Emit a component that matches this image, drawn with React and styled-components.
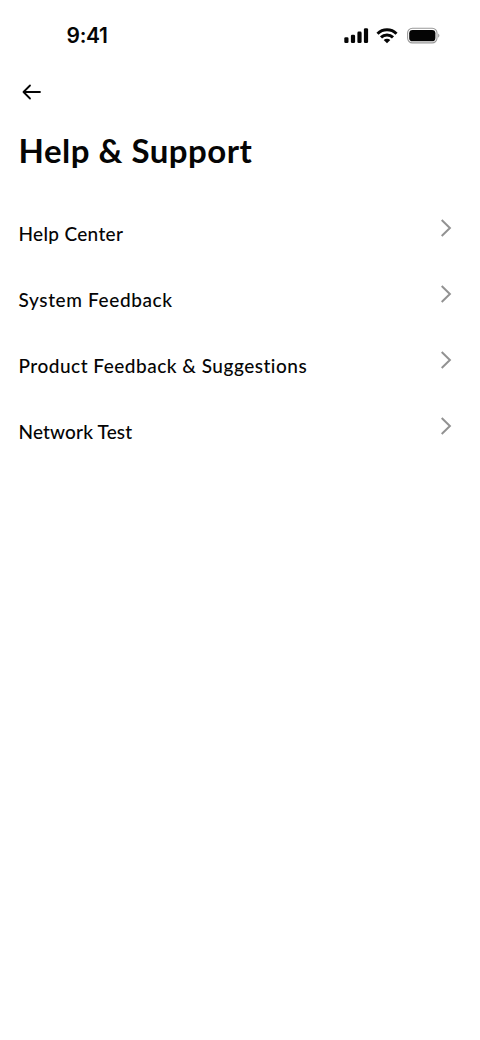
import React from 'react';
import styled, { createGlobalStyle } from 'styled-components';

const GlobalStyle = createGlobalStyle`
  * { box-sizing: border-box; }
  body { margin: 0; background: #fff; }
  svg { display: block; }
`;

const Screen = styled.div`
  width: 480px;
  height: 1040px;
  background: #fff;
  color: #050505;
  font-family: Lato, sans-serif;
  display: flex;
  flex-direction: column;
`;

const StatusBar = styled.div`
  height: 72px;
  padding: 0 40px 0 66.5px;
  display: flex;
  align-items: center;
  justify-content: space-between;
`;

const Clock = styled.span`
  font: 600 21px/30px Inter, sans-serif;
  letter-spacing: -0.3px;
`;

const StatusIcons = styled.div`
  display: flex;
  align-items: center;
`;

const IconSlot = styled.span`
  margin-right: ${(p) => p.$gap}px;
`;

const NavBar = styled.div`
  height: 40px;
  padding: 0 22px;
  display: flex;
  align-items: center;
`;

const BackButton = styled.button`
  border: 0;
  padding: 0;
  background: none;
  color: inherit;
`;

const Title = styled.h1`
  margin: 18px 0 0;
  padding-left: 18.5px;
  font-size: 33px;
  line-height: 40px;
  font-weight: 700;
  letter-spacing: 0.5px;
`;

const Menu = styled.ul`
  margin: 30px 0 0;
  padding: 0 28.5px 0 18.5px;
  list-style: none;
`;

const Row = styled.li`
  height: 66px;
  display: flex;
  align-items: flex-start;
  justify-content: space-between;
`;

const Label = styled.span`
  padding-top: 22px;
  font-size: 19px;
  line-height: 24px;
  font-weight: 500;
  letter-spacing: ${(p) => p.$tracking}px;
`;

const ChevronBox = styled.span`
  padding-top: 18px;
`;

const items = [
  { label: 'Help Center', tracking: 0.32 },
  { label: 'System Feedback', tracking: 0.62 },
  { label: 'Product Feedback & Suggestions', tracking: 0.5 },
  { label: 'Network Test', tracking: 0.16 },
];

const Signal = () => (
  <svg width="25" height="18" viewBox="0 0 25 18" fill="currentColor">
    <rect x="0.3" y="10.3" width="4.2" height="5.7" rx="1.3" />
    <rect x="6.9" y="7.8" width="4.2" height="8.2" rx="1.3" />
    <rect x="13.4" y="4.6" width="4.2" height="11.4" rx="1.3" />
    <rect x="19.9" y="1.2" width="4.2" height="14.8" rx="1.3" />
  </svg>
);

const Wifi = () => (
  <svg width="22" height="18" viewBox="0 0 22 18" fill="none" stroke="currentColor" strokeWidth="3">
    <path d="M1.5 6.7C6.8 1.5 15.2 1.5 20.5 6.7" />
    <path d="M5 10.3C8.3 7.1 13.7 7.1 17 10.3" />
    <path d="M11 16.2L7.7 12.9C9.6 11.3 12.4 11.3 14.3 12.9Z" fill="currentColor" stroke="none" />
  </svg>
);

const Battery = () => (
  <svg width="33" height="18" viewBox="0 0 33 18">
    <rect x="0.6" y="1.3" width="29.4" height="14.6" rx="4.8" fill="none" stroke="#999" strokeWidth="1.1" />
    <rect x="2.2" y="2.9" width="26.2" height="11.4" rx="3.4" fill="currentColor" />
    <path d="M31.2 6.5C32.8 7.3 32.8 9.9 31.2 10.7Z" fill="#999" />
  </svg>
);

const Arrow = () => (
  <svg width="20" height="18" viewBox="0 0 20 18" fill="none" stroke="currentColor" strokeWidth="1.8" strokeLinecap="round" strokeLinejoin="round">
    <path d="M18 9H1.5M8 2.5L1.5 9L8 15.5" />
  </svg>
);

const Chevron = () => (
  <svg width="12" height="20" viewBox="0 0 12 20" fill="none" stroke="#929292" strokeWidth="2">
    <path d="M1.7 2L9.9 10L1.7 18" />
  </svg>
);

export default function App() {
  return (
    <>
      <GlobalStyle />
      <Screen>
        <StatusBar>
          <Clock>9:41</Clock>
          <StatusIcons>
            <IconSlot $gap={7}><Signal /></IconSlot>
            <IconSlot $gap={9}><Wifi /></IconSlot>
            <IconSlot $gap={0}><Battery /></IconSlot>
          </StatusIcons>
        </StatusBar>
        <NavBar>
          <BackButton aria-label="Back"><Arrow /></BackButton>
        </NavBar>
        <Title>Help &amp; Support</Title>
        <Menu>
          {items.map((item) => (
            <Row key={item.label}>
              <Label $tracking={item.tracking}>{item.label}</Label>
              <ChevronBox><Chevron /></ChevronBox>
            </Row>
          ))}
        </Menu>
      </Screen>
    </>
  );
}
